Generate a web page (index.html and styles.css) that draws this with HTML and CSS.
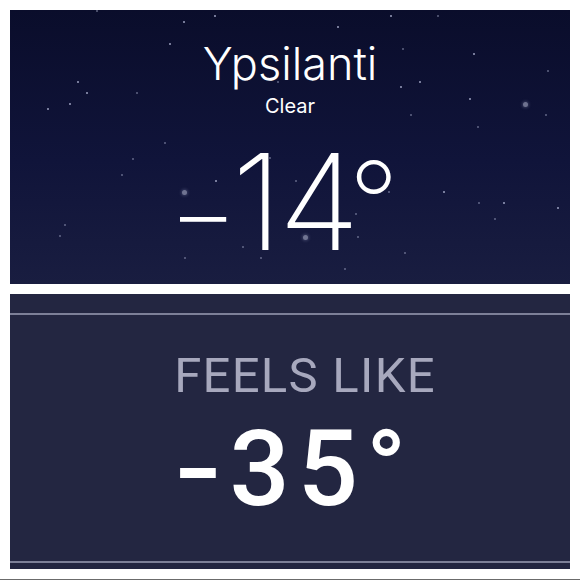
FILE: index.html
```html
<!DOCTYPE html>
<html lang="en">
<head>
<meta charset="utf-8">
<title>Ypsilanti weather</title>
<link rel="stylesheet" href="styles.css">
</head>
<body>
<main class="page">
  <section class="sky">
    <div class="stars" aria-hidden="true">
      <i class="star" style="left:173px;top:11px"></i>
      <i class="star" style="left:204px;top:5px"></i>
      <i class="star" style="left:327px;top:16px"></i>
      <i class="star" style="left:380px;top:5px"></i>
      <i class="star dim" style="left:427px;top:5px"></i>
      <i class="star dim" style="left:86px;top:0px"></i>
      <i class="star" style="left:159px;top:33px"></i>
      <i class="star dim" style="left:392px;top:38px"></i>
      <i class="star" style="left:463px;top:43px"></i>
      <i class="star dim" style="left:537px;top:60px"></i>
      <i class="star" style="left:67px;top:71px"></i>
      <i class="star" style="left:76px;top:82px"></i>
      <i class="star dim" style="left:126px;top:82px"></i>
      <i class="star" style="left:59px;top:93px"></i>
      <i class="star" style="left:37px;top:98px"></i>
      <i class="star dim" style="left:267px;top:71px"></i>
      <i class="star" style="left:409px;top:71px"></i>
      <i class="star" style="left:390px;top:76px"></i>
      <i class="star" style="left:459px;top:88px"></i>
      <i class="star glow" style="left:513px;top:92px"></i>
      <i class="star dim" style="left:400px;top:104px"></i>
      <i class="star dim" style="left:535px;top:104px"></i>
      <i class="star dim" style="left:467px;top:116px"></i>
      <i class="star dim" style="left:154px;top:132px"></i>
      <i class="star dim" style="left:122px;top:148px"></i>
      <i class="star dim" style="left:259px;top:147px"></i>
      <i class="star dim" style="left:111px;top:164px"></i>
      <i class="star glow" style="left:172px;top:180px"></i>
      <i class="star" style="left:205px;top:170px"></i>
      <i class="star dim" style="left:285px;top:170px"></i>
      <i class="star dim" style="left:378px;top:181px"></i>
      <i class="star" style="left:433px;top:181px"></i>
      <i class="star dim" style="left:468px;top:192px"></i>
      <i class="star" style="left:493px;top:192px"></i>
      <i class="star" style="left:547px;top:197px"></i>
      <i class="star dim" style="left:484px;top:208px"></i>
      <i class="star dim" style="left:345px;top:203px"></i>
      <i class="star dim" style="left:54px;top:214px"></i>
      <i class="star dim" style="left:49px;top:225px"></i>
      <i class="star glow" style="left:293px;top:225px"></i>
      <i class="star dim" style="left:347px;top:226px"></i>
      <i class="star dim" style="left:232px;top:236px"></i>
      <i class="star dim" style="left:394px;top:242px"></i>
      <i class="star dim" style="left:174px;top:247px"></i>
      <i class="star dim" style="left:250px;top:247px"></i>
      <i class="star dim" style="left:334px;top:258px"></i>
    </div>
    <h1 class="city">Ypsilanti</h1>
    <p class="condition">Clear</p>
    <p class="temp"><span class="minus">&minus;</span>1<span class="last-digit">4</span><span class="deg">°</span></p>
  </section>
  <section class="feels-panel">
    <div class="feels">
      <h2 class="feels-label">FEELS LIKE</h2>
      <p class="feels-temp"><span class="dash">-</span>35°</p>
    </div>
  </section>
</main>
</body>
</html>
```

FILE: styles.css
```css
* {
  box-sizing: border-box;
}

html, body {
  margin: 0;
  padding: 0;
  background: #ffffff;
}

body {
  width: 580px;
  height: 580px;
  overflow: hidden;
}

.page {
  height: 580px;
  padding: 10px 10px 0;
  display: flex;
  flex-direction: column;
  gap: 10px;
  border-bottom: 1px solid #6b6b6b;
}

.sky {
  position: relative;
  height: 274px;
  background: linear-gradient(180deg, #0a0d2b 0%, #10143a 55%, #191d40 100%);
  color: #ffffff;
  font-family: Inter, "Noto Sans", sans-serif;
  text-align: center;
  padding-top: 31px;
  overflow: hidden;
}

.stars {
  position: absolute;
  inset: 0;
}

.star {
  position: absolute;
  width: 2px;
  height: 2px;
  border-radius: 50%;
  background: #b4b8d6;
  opacity: 0.85;
}

.star.dim {
  opacity: 0.5;
}

.star.glow {
  width: 5px;
  height: 5px;
  background: #8f93ae;
  opacity: 0.75;
  box-shadow: 0 0 3px 1px rgba(150, 155, 190, 0.4);
}

.city,
.condition,
.temp {
  position: relative;
  margin: 0;
  line-height: 1;
}

.city {
  font-size: 45px;
  font-weight: 300;
}

.condition {
  margin-top: 10px;
  font-size: 20px;
  font-weight: 400;
}

.temp {
  margin-top: 19px;
  font-size: 133px;
  font-weight: 200;
  letter-spacing: -4px;
  padding-right: 13px;
}

.minus {
  font-size: 108px;
  letter-spacing: -6px;
}

.last-digit {
  letter-spacing: -11px;
}

.deg {
  font-size: 110px;
  letter-spacing: 0;
  vertical-align: 9px;
}

.feels-panel {
  height: 275px;
  background: #232641;
  padding: 19px 0 6px;
  font-family: Roboto, "Liberation Sans", sans-serif;
  text-align: center;
}

.feels {
  height: 250px;
  border-top: 2px solid #7d8098;
  border-bottom: 2px solid #7d8098;
  padding-top: 36px;
}

.feels-label {
  margin: 0;
  font-size: 49px;
  font-weight: 400;
  line-height: 1;
  color: #a7a8bd;
  letter-spacing: 1.3px;
  padding-left: 30px;
}

.feels-temp {
  margin: 16px 0 0;
  font-size: 106px;
  font-weight: 500;
  line-height: 1;
  color: #ffffff;
  letter-spacing: 8px;
  padding-left: 16px;
}

.dash {
  display: inline-block;
  transform: translateX(7px) scaleX(1.3);
  transform-origin: right center;
  margin-right: 4px;
}
```
